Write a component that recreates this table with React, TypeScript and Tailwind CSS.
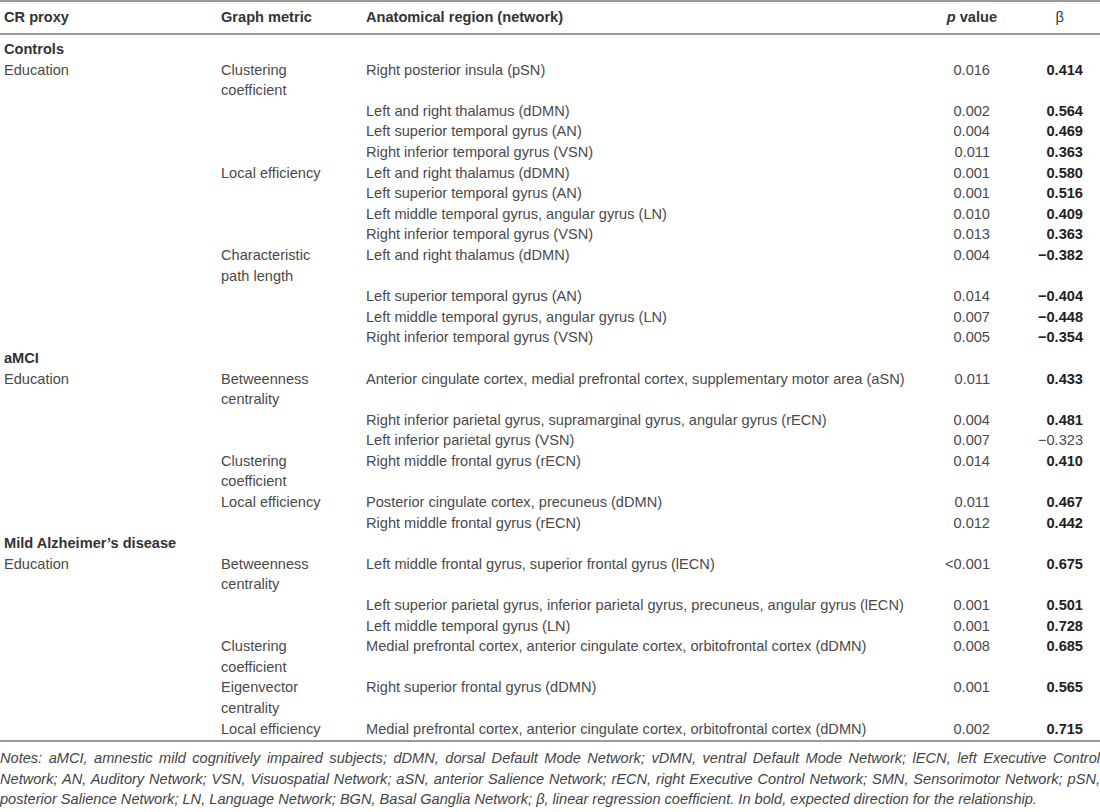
type Row = {
  proxy?: string;
  metric?: string[];
  region: string;
  p: string;
  beta: string;
  bold?: boolean;
};

type Group = { title: string; rows: Row[] };

const groups: Group[] = [
  {
    title: 'Controls',
    rows: [
      { proxy: 'Education', metric: ['Clustering', 'coefficient'], region: 'Right posterior insula (pSN)', p: '0.016', beta: '0.414', bold: true },
      { region: 'Left and right thalamus (dDMN)', p: '0.002', beta: '0.564', bold: true },
      { region: 'Left superior temporal gyrus (AN)', p: '0.004', beta: '0.469', bold: true },
      { region: 'Right inferior temporal gyrus (VSN)', p: '0.011', beta: '0.363', bold: true },
      { metric: ['Local efficiency'], region: 'Left and right thalamus (dDMN)', p: '0.001', beta: '0.580', bold: true },
      { region: 'Left superior temporal gyrus (AN)', p: '0.001', beta: '0.516', bold: true },
      { region: 'Left middle temporal gyrus, angular gyrus (LN)', p: '0.010', beta: '0.409', bold: true },
      { region: 'Right inferior temporal gyrus (VSN)', p: '0.013', beta: '0.363', bold: true },
      { metric: ['Characteristic', 'path length'], region: 'Left and right thalamus (dDMN)', p: '0.004', beta: '−0.382', bold: true },
      { region: 'Left superior temporal gyrus (AN)', p: '0.014', beta: '−0.404', bold: true },
      { region: 'Left middle temporal gyrus, angular gyrus (LN)', p: '0.007', beta: '−0.448', bold: true },
      { region: 'Right inferior temporal gyrus (VSN)', p: '0.005', beta: '−0.354', bold: true },
    ],
  },
  {
    title: 'aMCI',
    rows: [
      { proxy: 'Education', metric: ['Betweenness', 'centrality'], region: 'Anterior cingulate cortex, medial prefrontal cortex, supplementary motor area (aSN)', p: '0.011', beta: '0.433', bold: true },
      { region: 'Right inferior parietal gyrus, supramarginal gyrus, angular gyrus (rECN)', p: '0.004', beta: '0.481', bold: true },
      { region: 'Left inferior parietal gyrus (VSN)', p: '0.007', beta: '−0.323' },
      { metric: ['Clustering', 'coefficient'], region: 'Right middle frontal gyrus (rECN)', p: '0.014', beta: '0.410', bold: true },
      { metric: ['Local efficiency'], region: 'Posterior cingulate cortex, precuneus (dDMN)', p: '0.011', beta: '0.467', bold: true },
      { region: 'Right middle frontal gyrus (rECN)', p: '0.012', beta: '0.442', bold: true },
    ],
  },
  {
    title: 'Mild Alzheimer’s disease',
    rows: [
      { proxy: 'Education', metric: ['Betweenness', 'centrality'], region: 'Left middle frontal gyrus, superior frontal gyrus (lECN)', p: '<0.001', beta: '0.675', bold: true },
      { region: 'Left superior parietal gyrus, inferior parietal gyrus, precuneus, angular gyrus (lECN)', p: '0.001', beta: '0.501', bold: true },
      { region: 'Left middle temporal gyrus (LN)', p: '0.001', beta: '0.728', bold: true },
      { metric: ['Clustering', 'coefficient'], region: 'Medial prefrontal cortex, anterior cingulate cortex, orbitofrontal cortex (dDMN)', p: '0.008', beta: '0.685', bold: true },
      { metric: ['Eigenvector', 'centrality'], region: 'Right superior frontal gyrus (dDMN)', p: '0.001', beta: '0.565', bold: true },
      { metric: ['Local efficiency'], region: 'Medial prefrontal cortex, anterior cingulate cortex, orbitofrontal cortex (dDMN)', p: '0.002', beta: '0.715', bold: true },
    ],
  },
];

const notes = [
  'Notes: aMCI, amnestic mild cognitively impaired subjects; dDMN, dorsal Default Mode Network; vDMN, ventral Default Mode Network; lECN, left Executive Control',
  'Network; AN, Auditory Network; VSN, Visuospatial Network; aSN, anterior Salience Network; rECN, right Executive Control Network; SMN, Sensorimotor Network; pSN,',
];

export default function App() {
  return (
    <div className="w-[1100px] h-[812px] overflow-hidden bg-white font-['Liberation_Sans',Arial,sans-serif] text-[14.6px] leading-[20.6px] text-[#4a4a4a]">
      <table className="w-[1100px] table-fixed border-collapse">
        <colgroup>
          <col className="w-[221px]" />
          <col className="w-[145px]" />
          <col className="w-[564px]" />
          <col className="w-[67px]" />
          <col className="w-[103px]" />
        </colgroup>
        <thead>
          <tr className="border-t-2 border-b-2 border-[#9a9a9a] h-[33px] font-bold text-[#333]">
            <th className="pl-[4px] text-left align-middle">CR proxy</th>
            <th className="text-left align-middle">Graph metric</th>
            <th className="text-left align-middle">Anatomical region (network)</th>
            <th className="text-right align-middle">
              <i>p</i> value
            </th>
            <th className="pr-[36px] text-right align-middle font-normal">β</th>
          </tr>
        </thead>
        <tbody className="border-b-2 border-[#9a9a9a]">
          <tr className="h-[5px]">
            <td colSpan={5} />
          </tr>
          {groups.map((g) => (
            <GroupRows key={g.title} group={g} />
          ))}
          <tr className="h-[2px]">
            <td colSpan={5} />
          </tr>
        </tbody>
      </table>
      <div className="pt-[6px] italic text-[#444] text-justify">
        {notes.map((line) => (
          <div key={line} className="[text-align-last:justify]">
            {line}
          </div>
        ))}
        <div>
          posterior Salience Network; LN, Language Network; BGN, Basal Ganglia Network; β, linear regression coefficient. In bold, expected direction for the relationship.
        </div>
      </div>
    </div>
  );
}

function GroupRows({ group }: { group: Group }) {
  return (
    <>
      <tr>
        <td colSpan={5} className="pl-[4px] font-bold text-[#333]">
          {group.title}
        </td>
      </tr>
      {group.rows.map((r, i) => (
        <tr key={i} className="align-top">
          <td className="pl-[4px]">{r.proxy}</td>
          <td>
            {r.metric?.map((m) => (
              <div key={m}>{m}</div>
            ))}
          </td>
          <td>{r.region}</td>
          <td className="pr-[7px] text-right">{r.p}</td>
          <td className={`pr-[17px] text-right ${r.bold ? 'font-bold text-[#222]' : ''}`}>{r.beta}</td>
        </tr>
      ))}
    </>
  );
}
